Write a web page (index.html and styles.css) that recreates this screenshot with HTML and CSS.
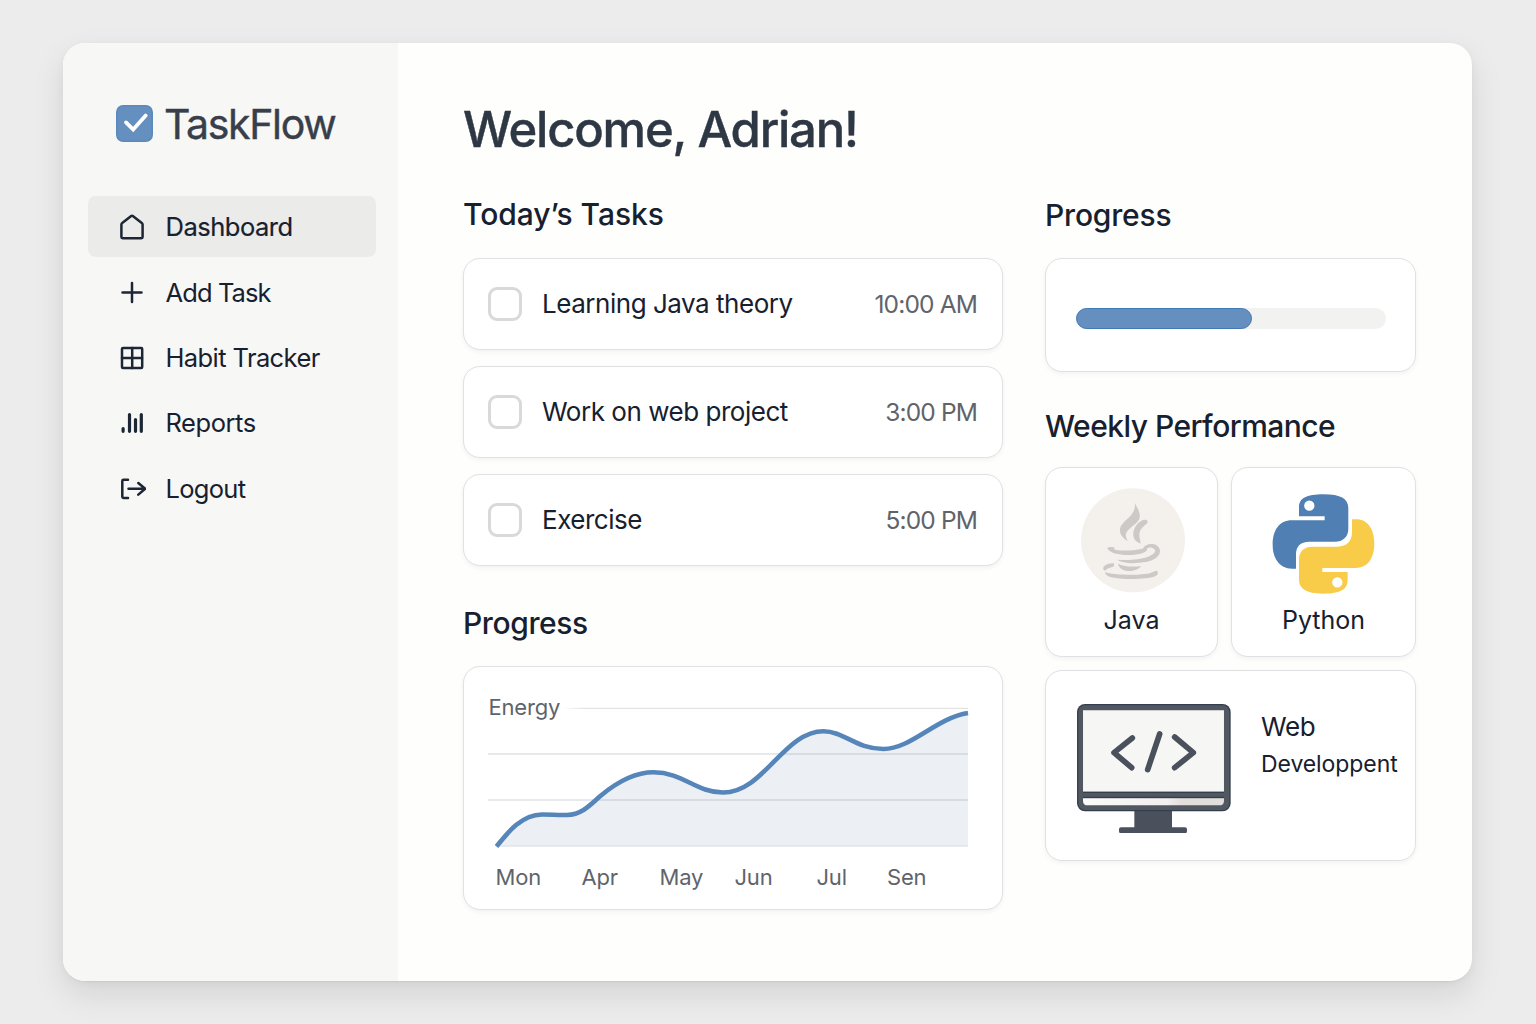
FILE: index.html
```html
<!DOCTYPE html>
<html lang="en">
<head>
<meta charset="utf-8">
<title>TaskFlow</title>
<link rel="stylesheet" href="styles.css">
</head>
<body>
<div class="window">
  <aside class="sidebar">
    <div class="brand">
      <svg class="brand-icon" viewBox="0 0 37 37"><rect x=".75" y=".75" width="35.5" height="35.5" rx="6.5" fill="#648fbf" stroke="#5a89bc" stroke-width="1.5"/><path d="M10 17.400l7.200 7.200L29.700 10.600" fill="none" stroke="#fff" stroke-width="3.800" stroke-linecap="round" stroke-linejoin="miter"/></svg>
      <span class="brand-name">TaskFlow</span>
    </div>
    <nav class="nav">
      <a class="nav-item active"><svg class="nav-icon" viewBox="0 0 28 28"><path d="M3.400 11.600q0-1 .8-1.600l9-7q.8-.6 1.600 0l9 7q.8.6.8 1.600v12.500q0 1.200-1.200 1.200H4.600q-1.200 0-1.200-1.200z"/></svg><span class="t-dashboard">Dashboard</span></a>
      <a class="nav-item"><svg class="nav-icon" viewBox="0 0 28 28"><path d="M14 5v19M4.500 14.500h19"/></svg><span class="t-add">Add Task</span></a>
      <a class="nav-item"><svg class="nav-icon" viewBox="0 0 28 28"><rect x="4" y="4" width="20.200" height="20" rx="1"/><path d="M14.200 4v20M4 14h20"/></svg><span class="t-habit">Habit Tracker</span></a>
      <a class="nav-item"><svg class="nav-icon bars" viewBox="0 0 28 28"><path d="M5.100 19.500v2.800M11.500 5.500v16.800M17.500 10.500v11.800M23.300 5.500v16.800"/></svg><span class="t-reports">Reports</span></a>
      <a class="nav-item"><svg class="nav-icon" viewBox="0 0 28 28"><path d="M10 4.800H5.500q-1.200 0-1.200 1.200v15.800q0 1.200 1.200 1.200H10M10.500 13.800h16.500M20.300 8l6.900 5.800-6.900 5.800"/></svg><span class="t-logout">Logout</span></a>
    </nav>
  </aside>

  <main class="main">
    <h1 class="welcome">Welcome, Adrian!</h1>
    <div class="columns">
      <div class="col-left">
        <h2 class="title t-today">Today’s Tasks</h2>
        <div class="tasks">
          <div class="card task"><span class="check"></span><span class="task-name">Learning Java theory</span><span class="task-time">10:00 AM</span></div>
          <div class="card task"><span class="check"></span><span class="task-name">Work on web project</span><span class="task-time">3:00 PM</span></div>
          <div class="card task"><span class="check"></span><span class="task-name">Exercise</span><span class="task-time">5:00 PM</span></div>
        </div>
        <h2 class="title title-chart">Progress</h2>
        <div class="card chart-card">
          <svg class="chart" viewBox="464 667 538 242">
            <defs><linearGradient id="fade" x1="0" x2="1"><stop offset="0" stop-color="#e2e3e4" stop-opacity="0"/><stop offset=".05" stop-color="#e2e3e4"/></linearGradient></defs>
            <path d="M496.500 846.500C508 832 522 814.500 542 814.500C552 814.500 557 815.300 567 815C583 814.500 592 803 601 795.500C616 783 634 772.300 653.500 772.300C683 772.300 696 792.500 723 792.500C764 792.500 784 731.300 823.500 731.300C844 731.300 856 749 883.500 749C911 749 936 718 968 713V846.500z" fill="#ecf0f5"/>
            <rect x="563" y="707.800" width="405" height="1.200" fill="url(#fade)"/>
            <path d="M488 754h480M488 800h480" stroke="#50555c" stroke-opacity=".17" stroke-width="1.300"/>
            <path d="M500 846h468" stroke="#dcdfe3" stroke-width="1"/>
            <path class="curve" d="M496.500 846.500C508 832 522 814.500 542 814.500C552 814.500 557 815.300 567 815C583 814.500 592 803 601 795.500C616 783 634 772.300 653.500 772.300C683 772.300 696 792.500 723 792.500C764 792.500 784 731.300 823.500 731.300C844 731.300 856 749 883.500 749C911 749 936 718 968 713"/>
            <g class="axis">
              <text x="488.500" y="715">Energy</text>
              <text x="495.500" y="885">Mon</text>
              <text x="581.500" y="885">Apr</text>
              <text x="659.500" y="885">May</text>
              <text x="734.500" y="885">Jun</text>
              <text x="816.500" y="885">Jul</text>
              <text x="887" y="885">Sen</text>
            </g>
          </svg>
        </div>
      </div>

      <div class="col-right">
        <h2 class="title t-progress">Progress</h2>
        <div class="card meter-card"><div class="meter"><div class="meter-fill" style="width:176px"></div></div></div>
        <h2 class="title title-weekly">Weekly Performance</h2>
        <div class="skills">
          <div class="card skill">
            <svg class="java" viewBox="120 84 318 314">
              <circle cx="279" cy="241" r="156" fill="#f4f1ed"/>
              <g fill="#cdc9c6">
                <path d="M284 128C293 146 301 158 299 173C296 191 262 204 258 221C256 230 260 236 263 243C247 234 238 221 240 206C243 182 292 168 284 128z"/>
                <path d="M317 179C324 181 325 187 319 192C305 203 298 212 298 225C298 236 302 243 302 251C284 246 278 232 280 217C282 198 302 177 317 179z"/>
                <path d="M201 264C207 260 217 260 225 263C219 267 224 270 236 271C258 273 284 271 308 266C313 256 325 251 338 252C352 254 361 264 360 275C358 293 334 304 309 307C283 312 244 309 231 299C263 302 300 299 322 291C342 284 350 274 343 268C338 262 330 261 322 264C322 276 307 282 284 284C249 287 211 283 201 264z"/>
                <path d="M234 311C247 318 275 322 303 318C296 329 280 334 263 333C247 331 237 324 234 311z"/>
                <path d="M222 310C212 309 197 312 191 320C188 325 190 330 195 332C201 325 213 323 222 319z"/>
                <path d="M195 336C219 346 306 347 331 339C340 336 343 333 350 332C357 337 354 345 345 349C319 360 239 359 211 351C201 348 196 343 195 336z"/>
              </g>
            </svg>
            <span class="skill-name t-java">Java</span>
          </div>
          <div class="card skill">
            <svg class="python" viewBox="140 100 310 305">
              <path d="M212 327H200C162 326 142 295 142 255C142 213 161 182 200 182H298V170H221V144C221 116 242 104 295 104C346 104 369 117 369 146V207C369 232 353 246 328 246H252C224 246 212 262 212 285z" fill="#4f7fb3"/>
              <path d="M380 179H392C429 179 447 211 447 251C447 294 429 325 391 325H291V337H367V361C367 389 346 402 294 402C243 402 221 388 221 359V300C221 275 236 261 262 261H337C364 261 380 245 380 218z" fill="#f8cc48"/>
              <circle cx="252" cy="138" r="15.500" fill="#fff"/><circle cx="336" cy="368" r="15.500" fill="#fff"/>
            </svg>
            <span class="skill-name t-python">Python</span>
          </div>
          <div class="card web">
            <svg class="monitor" viewBox="111 131 462 388">
              <defs><linearGradient id="chin" x1="0" x2="1"><stop offset="0" stop-color="#fbfbfb"/><stop offset=".6" stop-color="#f1efee"/><stop offset=".7" stop-color="#e2dedb"/><stop offset="1" stop-color="#e2dedb"/></linearGradient></defs>
              <path d="M283 445h113v56h39q6 0 6 6v6q0 6-6 6H243q-6 0-6-6v-6q0-6 6-6h40z" fill="#4b515c"/>
              <rect x="111" y="131" width="461" height="322" rx="24" fill="#353e4c"/>
              <rect x="115" y="135" width="453" height="314" rx="20" fill="#515862"/>
              <path d="M129 150h423v244H129z" fill="#f6f6f5"/>
              <path d="M129 394h423v4H129zM129 409h423v4H129z" fill="#353e4c"/>
              <path d="M129 414h423v7q0 14-14 14H143q-14 0-14-14z" fill="url(#chin)"/>
              <path d="M277 233L222 277L275 322M359 221L323 328M404 230L460 277L404 322" fill="none" stroke="#4b515c" stroke-width="17" stroke-linecap="round" stroke-linejoin="round"/>
            </svg>
            <div class="web-text"><span class="web-1">Web</span><span class="web-2">Developpent</span></div>
          </div>
        </div>
      </div>
    </div>
  </main>
</div>
</body>
</html>
```
FILE: styles.css
```css
* { box-sizing: border-box; }
body {
  margin: 0;
  height: 1024px;
  padding: 43px 64px 43px 63px;
  overflow: hidden;
  background: #ececec;
  font-family: Inter, "Liberation Sans", sans-serif;
  color: #17202e;
}
.window {
  display: flex;
  width: 1409px;
  height: 938px;
  border-radius: 22px;
  overflow: hidden;
  background: #fefefd;
  box-shadow: 0 14px 32px rgba(0, 0, 0, .1), 0 2px 8px rgba(0, 0, 0, .04), 0 1px 1px rgba(0, 0, 0, .04);
}
.sidebar {
  width: 335px;
  flex: none;
  padding: 57px 22px 0 25px;
  background: #f7f7f6;
}
.brand { display: flex; align-items: center; height: 48px; padding-left: 28px; gap: 11px; }
.brand-icon { width: 37px; height: 37px; display: block; margin-bottom: 2px; }
.brand-name { font-size: 41px; line-height: 48px; letter-spacing: -1.350px; color: #383f4b; -webkit-text-stroke: .4px #383f4b; }
.nav { display: flex; flex-direction: column; gap: 4.400px; margin-top: 48px; }
.nav-item {
  display: flex;
  align-items: center;
  height: 61px;
  padding: 1px 0 0 30px;
  gap: 19.500px;
  border-radius: 8px;
  font-size: 25.500px;
  letter-spacing: -.6px;
  white-space: nowrap;
}
.nav-item.active { background: #ebebea; }
.t-dashboard { margin-bottom: 1px; letter-spacing: -.480px; -webkit-text-stroke: .2px #17202e; }
.t-add { padding-top: 1px; letter-spacing: -.9px; }
.t-reports { margin-bottom: 1px; letter-spacing: -.450px; }
.t-logout { letter-spacing: -.7px; }
.nav-icon {
  width: 28px; height: 28px; flex: none;
  fill: none; stroke: #1c2634; stroke-width: 2.500;
  stroke-linecap: round; stroke-linejoin: round;
}
.bars { stroke-width: 3.200; }
.main { flex: 1; padding: 57px 56px 0 65px; }
.welcome {
  margin: 0 0 34px;
  font-size: 49px; line-height: 60px; font-weight: 500;
  letter-spacing: -1.220px; color: #2e3744; white-space: nowrap;
  -webkit-text-stroke: .4px #2e3744;
}
.columns { display: flex; gap: 42px; }
.col-left { width: 540px; }
.col-right { width: 371px; }
.title {
  margin: 0; height: 40px;
  font-size: 30px; line-height: 40px; font-weight: 500;
  letter-spacing: -.350px; white-space: nowrap;
}
.t-today { letter-spacing: -.050px; }
.t-progress { padding-top: 1px; letter-spacing: -.2px; }
.card {
  background: #fff;
  border: 1px solid #dfe1e3;
  border-radius: 17px;
  box-shadow: 0 2px 5px rgba(0, 0, 0, .05);
}
.tasks { display: flex; flex-direction: column; gap: 16px; margin-top: 24px; }
.task { display: flex; align-items: center; height: 92px; padding: 0 24px; }
.check { width: 34px; height: 34px; border: 3px solid #d9d9d8; border-radius: 9px; }
.task-name { margin: 0 0 2px 20px; font-size: 26px; letter-spacing: -.470px; }
.task-time { margin: 0 1px 0 auto; font-size: 24.500px; letter-spacing: -.850px; color: #5f646b; }
.title-chart { margin-top: 37px; letter-spacing: -.4px; }
.chart-card { height: 244px; margin-top: 23px; }
.chart { display: block; width: 538px; height: 242px; }
.curve { fill: none; stroke: #5685b9; stroke-width: 4.600; }
.axis { font-size: 22px; letter-spacing: -.2px; fill: #5f646b; }
.meter-card { height: 114px; margin-top: 24px; padding: 49px 29px 0 30px; }
.meter { height: 21px; border-radius: 11px; background: #f2f2f1; }
.meter-fill { height: 21px; border-radius: 11px; background: #648fbe; border: 1px solid #3f7ab5; }
.title-weekly { margin-top: 34px; letter-spacing: -.530px; }
.skills { display: grid; grid-template-columns: 173px 185px; gap: 13px; margin-top: 21px; }
.skill { display: flex; flex-direction: column; align-items: center; height: 190px; padding-top: 20px; }
.java { width: 106px; height: 104.700px; margin-left: 2px; }
.python { width: 103.300px; height: 101.700px; margin-top: 5px; }
.skill-name { font-size: 25px; line-height: 32px; margin-top: 11px; }
.t-python { margin-top: 9px; }
.web { grid-column: 1 / -1; display: flex; height: 191px; padding: 33px 0 0 31px; }
.monitor { width: 154px; height: 129.300px; flex: none; }
.web-text { display: flex; flex-direction: column; margin-left: 30px; padding-top: 4px; }
.web-1 { font-size: 26px; line-height: 38px; letter-spacing: -.3px; }
.web-2 { font-size: 23px; line-height: 36px; letter-spacing: -.080px; }
```
